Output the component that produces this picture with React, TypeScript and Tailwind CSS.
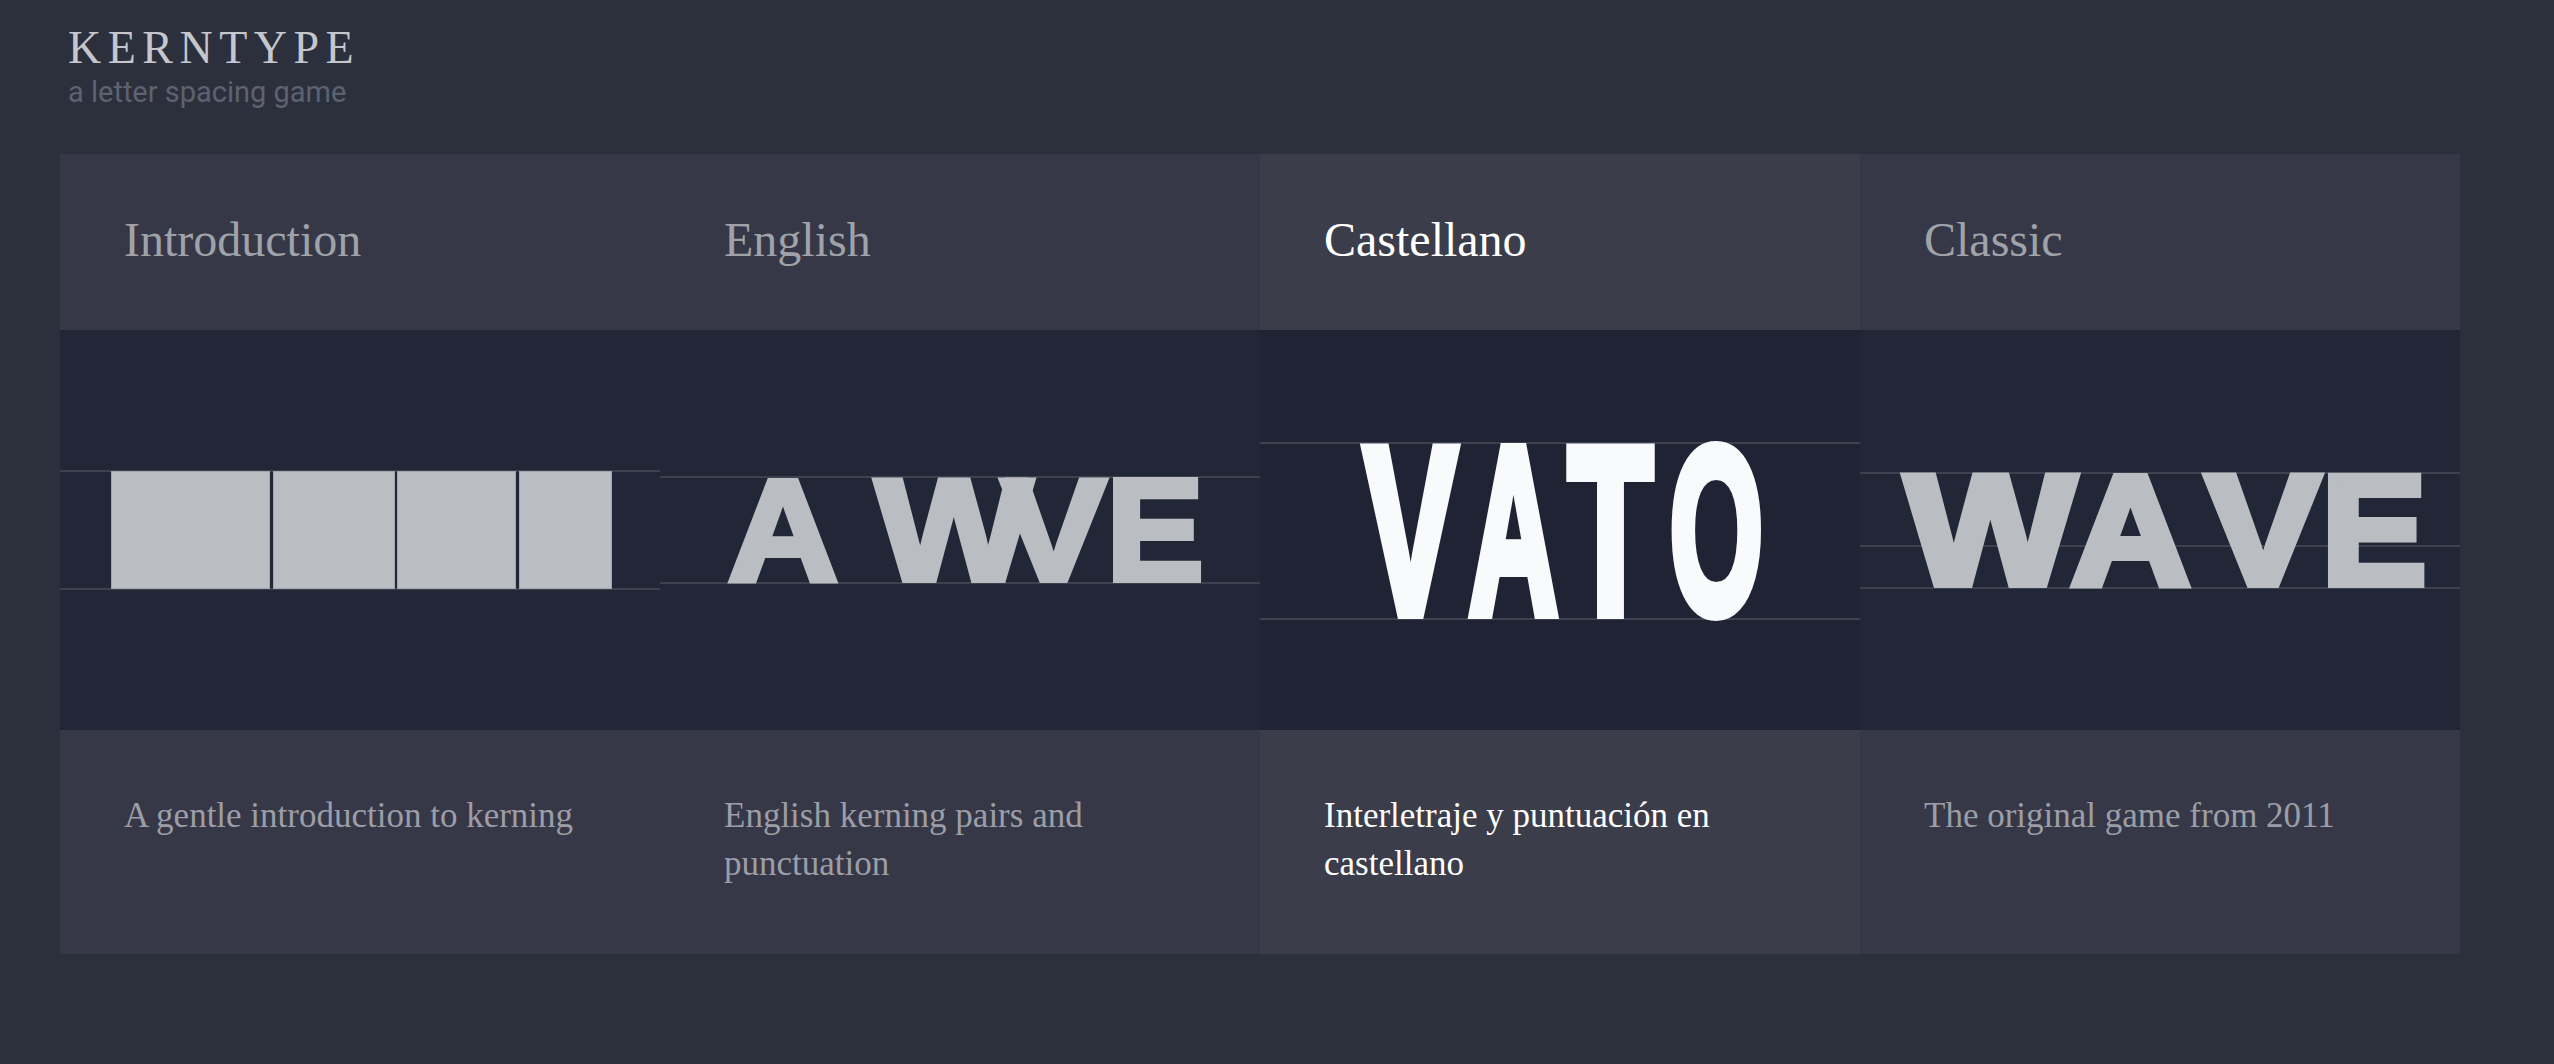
import React from 'react';

type Glyph = {
    ch: string;
    left: number;
    right: number;
    // ink metrics of the glyph in Liberation Sans Bold, as share of the advance
    lsb: number;
    ink: number;
};

type Board = {
    title: string;
    blurb: string;
    active?: boolean;
    lines: number[];
    capTop?: number;
    baseline?: number;
    stroke?: number;
    color?: string;
    glyphs?: Glyph[];
    boxes?: [number, number][];
};

const CAP = 0.688;

const METRICS: Record<string, { lsb: number; ink: number }> = {
    A: { lsb: 0, ink: 1 },
    W: { lsb: 0.003, ink: 0.995 },
    V: { lsb: 0, ink: 1 },
    E: { lsb: 0.11, ink: 0.81 },
    T: { lsb: 0.032, ink: 0.935 },
    O: { lsb: 0.055, ink: 0.89 },
};

const g = (ch: string, left: number, right: number): Glyph => ({ ch, left, right, ...METRICS[ch] });

const boards: Board[] = [
    {
        title: 'Introduction',
        blurb: 'A gentle introduction to kerning',
        lines: [141, 259],
        boxes: [[51, 210], [213, 335], [337, 456], [459, 552]],
    },
    {
        title: 'English',
        blurb: 'English kerning pairs and punctuation',
        lines: [147, 253],
        capTop: 147,
        baseline: 253,
        stroke: 6,
        color: '#babdc2',
        glyphs: [g('A', 65, 181), g('W', 213, 375), g('V', 338, 449), g('E', 454, 539)],
    },
    {
        title: 'Castellano',
        blurb: 'Interletraje y puntuación en castellano',
        active: true,
        lines: [113, 289],
        capTop: 113,
        baseline: 289,
        stroke: 12,
        color: '#f8fafc',
        glyphs: [g('V', 98, 203), g('A', 203, 304), g('T', 305, 396), g('O', 409, 504)],
    },
    {
        title: 'Classic',
        blurb: 'The original game from 2011',
        lines: [143, 216, 258],
        capTop: 143,
        baseline: 258,
        stroke: 8,
        color: '#babdc2',
        glyphs: [g('W', 42, 219), g('A', 207, 334), g('V', 342, 464), g('E', 469, 562)],
    },
];

const Canvas: React.FC<{ board: Board }> = ({ board }) => {
    const sw = board.stroke ?? 0;
    const cap = (board.baseline ?? 0) - (board.capTop ?? 0) - sw;
    const fs = cap / CAP;
    const base = (board.baseline ?? 0) - sw / 2;

    return (
        <svg width="600" height="400" viewBox="0 0 600 400" className="block">
            {board.lines.map((y) => (
                <rect key={y} x="0" y={y - 1} width="600" height="2" fill="#3d4150" />
            ))}
            {board.boxes?.map(([l, r]) => (
                <rect key={l} x={l + 0.5} y={141.5} width={r - l - 1} height={117} fill="#babdc2" stroke="#a3a6ad" strokeWidth="1" />
            ))}
            {board.glyphs?.map((gl) => {
                const inkW = gl.right - gl.left - sw;
                const adv = inkW / gl.ink;
                const x = gl.left + sw / 2 - gl.lsb * adv;
                return (
                    <text
                        key={gl.ch + gl.left}
                        x={x}
                        y={base}
                        textLength={adv}
                        lengthAdjust="spacingAndGlyphs"
                        fontFamily="'Liberation Sans', Arial, sans-serif"
                        fontWeight="700"
                        fontSize={fs}
                        fill={board.color}
                        stroke={board.color}
                        strokeWidth={sw}
                    >
                        {gl.ch}
                    </text>
                );
            })}
        </svg>
    );
};

const App: React.FC = () => {
    return (
        <div className="min-h-screen w-full bg-[#2c303d] px-[60px] pt-[25px] pb-[110px]">
            {/* Masthead */}
            <div className="pl-[8px]">
                <h1 className="font-['Liberation_Serif',serif] text-[46px] leading-[46px] tracking-[6.5px] text-[#c5c7cd]">KERNTYPE</h1>
                <p className="mt-[7px] font-['Roboto',sans-serif] text-[29px] leading-[28px] text-[#5d6271]">a letter spacing game</p>
            </div>

            {/* Game boards */}
            <div className="mt-[48px] grid w-[2400px] grid-cols-4">
                {boards.map((b) => (
                    <div key={b.title} className="flex flex-col">
                        <div
                            className={`flex h-[176px] items-center pb-[4px] pl-16 font-['Liberation_Serif',serif] text-[48px] ${
                                b.active ? 'bg-[#3b3d4a] text-white' : 'bg-[#363848] text-[#a0a2aa]'
                            }`}
                        >
                            {b.title}
                        </div>
                        <div className={`h-[400px] overflow-hidden ${b.active ? 'bg-[#1f2333]' : 'bg-[#222737]'}`}>
                            <Canvas board={b} />
                        </div>
                        <div
                            className={`h-[224px] pt-[62px] pl-16 pr-[56px] font-['Liberation_Serif',serif] text-[35px] leading-[48px] ${
                                b.active ? 'bg-[#3b3d4a] text-white' : 'bg-[#363848] text-[#9c9ea7]'
                            }`}
                        >
                            {b.blurb}
                        </div>
                    </div>
                ))}
            </div>
        </div>
    );
};

export default App;
